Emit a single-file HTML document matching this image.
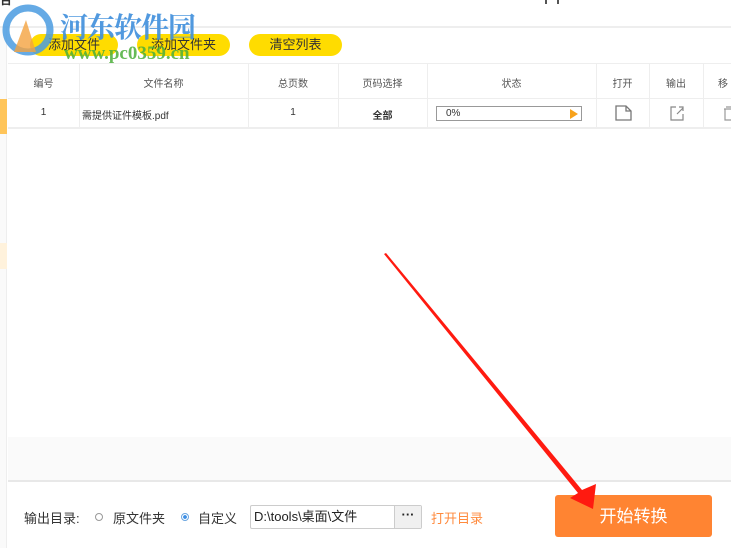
<!DOCTYPE html>
<html><head><meta charset="utf-8"><style>
*{margin:0;padding:0;box-sizing:border-box}
body{width:731px;height:548px;overflow:hidden;background:#fff;font-family:"Liberation Sans","Noto Sans CJK SC",sans-serif;position:relative;color:#333}
.a{position:absolute}
.btn{position:absolute;top:34px;height:22px;border-radius:11px;background:#ffdc00;font-size:13px;text-align:center;line-height:22px;color:#333}
.th,.td{position:absolute;font-size:10px;text-align:center;color:#555}
.vl{position:absolute;width:1px;background:#eee}
</style></head><body>
<div class="a" style="left:0;top:-9px;font-size:12px;font-weight:bold">台</div>
<div class="a" style="left:545px;top:0;width:2px;height:4px;background:#555"></div>
<div class="a" style="left:557px;top:0;width:2px;height:4px;background:#555"></div>
<div class="a" style="left:0;top:26px;width:731px;height:2px;background:#eee"></div>
<div class="a" style="left:0;top:28px;width:7px;height:520px;background:#fafafa;border-right:1px solid #eee"></div>
<div class="a" style="left:0;top:99px;width:7px;height:35px;background:#ffc55a"></div>
<div class="a" style="left:0;top:243px;width:7px;height:26px;background:#fff2dc"></div>
<div class="btn" style="left:30px;width:88px">添加文件</div>
<div class="btn" style="left:137px;width:93px">添加文件夹</div>
<div class="btn" style="left:249px;width:93px">清空列表</div>
<div class="a" style="left:8px;top:63px;width:723px;height:1px;background:#eee"></div>
<div class="a" style="left:8px;top:98px;width:723px;height:1px;background:#eee"></div>
<div class="a" style="left:8px;top:127px;width:723px;height:2px;background:#eee"></div>
<div class="vl" style="left:79px;top:64px;height:64px"></div>
<div class="vl" style="left:248px;top:64px;height:64px"></div>
<div class="vl" style="left:338px;top:64px;height:64px"></div>
<div class="vl" style="left:427px;top:64px;height:64px"></div>
<div class="vl" style="left:596px;top:64px;height:64px"></div>
<div class="vl" style="left:649px;top:64px;height:64px"></div>
<div class="vl" style="left:703px;top:64px;height:64px"></div>
<div class="th" style="left:8px;width:71px;top:75px">编号</div>
<div class="th" style="left:79px;width:169px;top:75px">文件名称</div>
<div class="th" style="left:248px;width:90px;top:75px">总页数</div>
<div class="th" style="left:338px;width:89px;top:75px">页码选择</div>
<div class="th" style="left:427px;width:169px;top:75px">状态</div>
<div class="th" style="left:596px;width:53px;top:75px">打开</div>
<div class="th" style="left:649px;width:54px;top:75px">输出</div>
<div class="th" style="left:703px;width:40px;top:75px;text-align:left;padding-left:15px">移</div>
<div class="td" style="left:8px;width:71px;top:107px;color:#333">1</div>
<div class="td" style="left:82px;top:107px;color:#333">需提供证件模板.pdf</div>
<div class="td" style="left:248px;width:90px;top:107px;color:#333">1</div>
<div class="td" style="left:338px;width:89px;top:107px;color:#333;font-weight:bold">全部</div>
<div class="a" style="left:436px;top:106px;width:146px;height:15px;border:1px solid #999;font-size:10px;line-height:13px;padding-left:9px;color:#333">0%<div class="a" style="right:3px;top:2px;border-left:8px solid #f7a21b;border-top:5px solid transparent;border-bottom:5px solid transparent"></div></div>
<svg class="a" style="left:614px;top:104px" width="20" height="18"><path d="M2 2H12L17 7V16H2Z M12 2V7H17" fill="none" stroke="#777" stroke-width="1.3"/></svg>
<svg class="a" style="left:668px;top:104px" width="18" height="18"><path d="M8 3H3V16H15V10 M9 10L15 4 M11 3H15V7" fill="none" stroke="#888" stroke-width="1.2"/></svg>
<svg class="a" style="left:722px;top:104px" width="10" height="18"><path d="M2 5H10 M4 3H9 M3 5V16H10" fill="none" stroke="#999" stroke-width="1.2"/></svg>
<div class="a" style="left:8px;top:437px;width:723px;height:44px;background:#fafafa"></div>
<div class="a" style="left:8px;top:480px;width:723px;height:2px;background:#e8e8e8"></div>
<div class="a" style="left:24px;top:508px;font-size:13px;color:#333">输出目录:</div>
<div class="a" style="left:95px;top:513px;width:8px;height:8px;border:1px solid #999;border-radius:50%"></div>
<div class="a" style="left:113px;top:508px;font-size:13px">原文件夹</div>
<div class="a" style="left:181px;top:513px;width:8px;height:8px;border:1px solid #6aa5e0;border-radius:50%;background:radial-gradient(#3a8ee6 40%,#fff 50%)"></div>
<div class="a" style="left:198px;top:508px;font-size:13px">自定义</div>
<div class="a" style="left:250px;top:505px;width:172px;height:24px;border:1px solid #ccc;border-radius:2px;font-size:13px;line-height:22px;padding-left:3px;color:#222">D:\tools\桌面\文件<div class="a" style="right:0;top:0;width:27px;height:22px;border-left:1px solid #ccc;background:#f0f0f0;text-align:center;font-weight:bold;line-height:18px">···</div></div>
<div class="a" style="left:431px;top:508px;font-size:13px;color:#ff8a3d">打开目录</div>
<div class="a" style="left:555px;top:495px;width:157px;height:42px;background:#ff8432;border-radius:3px;color:#fff;font-size:17px;text-align:center;line-height:44px">开始转换</div>
<svg class="a" style="left:0;top:0" width="731" height="548"><path d="M384 254L386 253L582 490L596 484L593 509L570 498L578 493Z" fill="#ff1a10"/></svg>
<svg class="a" style="left:0;top:2px" width="60" height="60"><circle cx="28" cy="28" r="22" fill="none" stroke="#4a9be0" stroke-width="7" opacity=".85"/><path d="M14 50L26 18L36 50" fill="#f4a340" opacity=".8"/></svg>
<div class="a" style="left:60px;top:6px;font-size:28px;font-weight:bold;color:#3f8fdc;font-family:'Noto Serif CJK SC',serif;opacity:.9;letter-spacing:-1px">河东软件园</div>
<div class="a" style="left:64px;top:43px;font-size:19px;font-weight:bold;color:#4caf3a;font-family:'Liberation Serif',serif;opacity:.85">www.pc0359.cn</div>
</body></html>
